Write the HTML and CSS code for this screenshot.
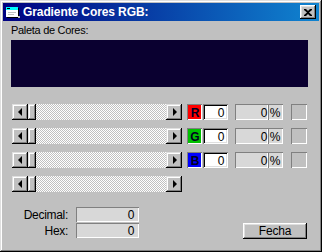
FILE: index.html
```html
<!doctype html>
<html lang="pt">

<head>
    <meta charset="utf-8" />
    <title>Gradiente Cores RGB</title>
    <link rel="stylesheet" href="styles.css">
</head>

<body>
    <div class="window">
        <div class="titlebar">
            <svg class="app-icon" width="16" height="16" viewBox="0 0 16 16">
                <rect x="2" y="4" width="12" height="10" fill="#000"/>
                <rect x="1" y="3" width="12" height="10" fill="#fff"/>
                <rect x="1" y="3" width="12" height="3" fill="#00ffff"/>
                <rect x="2" y="4" width="3" height="1" fill="#000"/>
                <rect x="3" y="8" width="8" height="1" fill="#c0c0c0"/>
                <rect x="3" y="10" width="6" height="1" fill="#c0c0c0"/>
                <rect x="13" y="12" width="2" height="2" fill="#c0c0c0"/>
            </svg>
            <span class="title">Gradiente Cores RGB:</span>
            <button class="close">
                <svg width="8" height="7" viewBox="0 0 8 7">
                    <path d="M0 0h2l2 2 2-2h2v1l-3 2.5 3 2.5v1h-2l-2-2-2 2h-2v-1l3-2.5-3-2.5z" fill="#000"/>
                </svg>
            </button>
        </div>

        <div class="content">
            <div class="label">Paleta de Cores:</div>
            <div class="palette"></div>

            <div class="rows">
                <div class="row">
                    <div class="scrollbar">
                        <span class="arrow left"></span><span class="thumb"></span><span class="track"></span><span class="arrow right"></span>
                    </div>
                    <span class="swatch red">R</span>
                    <span class="field white">0</span>
                    <span class="field gray pct-value">0</span><span class="field gray pct">%</span>
                    <span class="check"></span>
                </div>
                <div class="row">
                    <div class="scrollbar">
                        <span class="arrow left"></span><span class="thumb"></span><span class="track"></span><span class="arrow right"></span>
                    </div>
                    <span class="swatch green">G</span>
                    <span class="field white">0</span>
                    <span class="field gray pct-value">0</span><span class="field gray pct">%</span>
                    <span class="check"></span>
                </div>
                <div class="row">
                    <div class="scrollbar">
                        <span class="arrow left"></span><span class="thumb"></span><span class="track"></span><span class="arrow right"></span>
                    </div>
                    <span class="swatch blue">B</span>
                    <span class="field white">0</span>
                    <span class="field gray pct-value">0</span><span class="field gray pct">%</span>
                    <span class="check"></span>
                </div>
                <div class="row">
                    <div class="scrollbar">
                        <span class="arrow left"></span><span class="thumb"></span><span class="track"></span><span class="arrow right"></span>
                    </div>
                </div>
            </div>

            <div class="bottom">
                <div class="values">
                    <span class="value-label">Decimal:</span>
                    <span class="field gray value">0</span>
                    <span class="value-label">Hex:</span>
                    <span class="field gray value">0</span>
                </div>
                <button class="button">Fecha</button>
            </div>
        </div>
    </div>
</body>

</html>
```

FILE: styles.css
```css
body {
    margin: 0;
    font-family: "Liberation Sans", Arial, sans-serif;
    font-size: 11px;
    letter-spacing: -0.3px;
    color: #000;
}

.window {
    width: 322px;
    height: 252px;
    box-sizing: border-box;
    padding: 3px;
    background-color: #c0c0c0;
    box-shadow: inset -1px -1px #000, inset 1px 1px #dfdfdf, inset -2px -2px #808080, inset 2px 2px #fff;
}

.titlebar {
    height: 18px;
    display: flex;
    align-items: center;
    padding: 0 3px 0 2px;
    background: linear-gradient(90deg, #000080, #1084d0);
}

.app-icon {
    margin-right: 2px;
}

.title {
    color: #fff;
    font-weight: bold;
    font-size: 12px;
    letter-spacing: -0.1px;
}

.close {
    margin-left: auto;
    width: 16px;
    height: 14px;
    padding: 0;
    border: none;
    display: flex;
    align-items: center;
    justify-content: center;
    background-color: #c0c0c0;
    box-shadow: inset -1px -1px #000, inset 1px 1px #fff, inset -2px -2px #808080, inset 2px 2px #dfdfdf;
}

.content {
    padding: 2px 8px 0 8px;
}

.label {
    height: 14px;
    line-height: 14px;
}

.palette {
    margin-top: 3px;
    width: 297px;
    height: 47px;
    background-color: #0a0030;
}

.rows {
    margin-top: 17px;
    display: flex;
    flex-direction: column;
    gap: 8px;
}

.row {
    height: 16px;
    display: flex;
    align-items: center;
}

.scrollbar {
    margin-left: 1px;
    width: 170px;
    height: 16px;
    display: flex;
}

.arrow,
.thumb {
    width: 16px;
    height: 16px;
    box-sizing: border-box;
    display: flex;
    align-items: center;
    justify-content: center;
    background-color: #c0c0c0;
    box-shadow: inset -1px -1px #000, inset 1px 1px #dfdfdf, inset -2px -2px #808080, inset 2px 2px #fff;
}

.thumb {
    width: 8px;
}

.arrow::before {
    content: "";
    width: 0;
    height: 0;
    border-top: 4px solid transparent;
    border-bottom: 4px solid transparent;
}

.arrow.left::before {
    border-right: 4px solid #000;
    margin-left: -1px;
}

.arrow.right::before {
    border-left: 4px solid #000;
    margin-left: 1px;
}

.track {
    flex: 1;
    background: repeating-conic-gradient(#fff 0 25%, #c0c0c0 0 50%) 0 0 / 2px 2px;
}

.swatch {
    margin-left: 5px;
    width: 15px;
    height: 16px;
    box-sizing: border-box;
    display: flex;
    align-items: center;
    justify-content: center;
    padding: 1px 0 0 1px;
    font-weight: bold;
    font-size: 12px;
    letter-spacing: 0;
    color: #000020;
    box-shadow: inset 1px 1px #808080, inset -1px -1px #fff;
}

.swatch.red {
    background-color: #ff0000;
}

.swatch.green {
    background-color: #00c000;
}

.swatch.blue {
    background-color: #0000ff;
}

.field {
    height: 16px;
    box-sizing: border-box;
    display: flex;
    align-items: center;
    justify-content: flex-end;
    padding: 1px 4px 0 0;
    font-size: 12px;
}

.field.white {
    margin-left: 1px;
    width: 25px;
    background-color: #fff;
    box-shadow: inset 1px 1px #808080, inset -1px -1px #fff, inset 2px 2px #000, inset -2px -2px #dfdfdf;
}

.field.gray {
    background-color: #d8d8d8;
    box-shadow: inset 1px 1px #808080, inset -1px -1px #fff;
}

.pct-value {
    margin-left: 7px;
    width: 33px;
    padding-right: 1px;
}

.pct {
    width: 15px;
    padding-right: 3px;
}

.check {
    margin-left: 8px;
    width: 16px;
    height: 16px;
    box-sizing: border-box;
    box-shadow: inset 1px 1px #808080, inset -1px -1px #fff;
}

.bottom {
    margin-top: 15px;
    display: flex;
    align-items: flex-end;
    justify-content: space-between;
    width: 296px;
}

.values {
    display: grid;
    grid-template-columns: 57px 63px;
    column-gap: 8px;
    row-gap: 1px;
    align-items: center;
}

.value-label {
    text-align: right;
    font-size: 12px;
}

.value {
    height: 15px;
    padding-right: 5px;
    box-shadow: inset 1px 1px #808080, inset -1px -1px #fff, inset 2px 2px #000, inset -2px -2px #dfdfdf;
}

.button {
    width: 64px;
    height: 16px;
    margin-bottom: -1px;
    padding: 0;
    border: none;
    font-family: "Liberation Sans", Arial, sans-serif;
    font-size: 12px;
    letter-spacing: -0.2px;
    color: #000;
    background-color: #c0c0c0;
    box-shadow: inset -1px -1px #000, inset 1px 1px #fff, inset -2px -2px #808080, inset 2px 2px #dfdfdf;
}
```
